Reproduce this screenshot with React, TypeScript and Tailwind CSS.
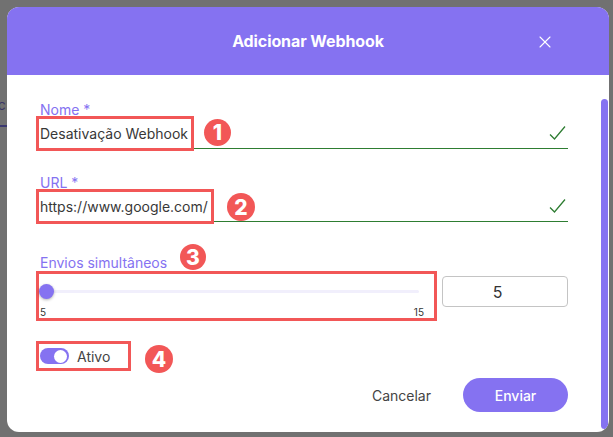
import { X } from 'lucide-react';

const PURPLE = '#8572f1';

function Badge({ n, className }: { n: number; className: string }) {
  return (
    <span
      className={`absolute flex items-center justify-center rounded-full bg-[#f25757] text-white font-extrabold text-[21px] leading-none ${className}`}
    >
      {n}
    </span>
  );
}

function Check() {
  return (
    <svg width="17" height="16" viewBox="0 0 17 16" className="ml-auto mr-[2px]">
      <path d="M1 9.5 L5.5 14 L16 1.5" fill="none" stroke="#2e7d32" strokeWidth="1.3" />
    </svg>
  );
}

function Field({ label, value, boxRight, badge, badgeClass, className }: {
  label: string;
  value: string;
  boxRight: number;
  badge: number;
  badgeClass: string;
  className: string;
}) {
  return (
    <div className={`relative ${className}`}>
      <label className="block text-[14px] leading-[17px] text-[#8572f1]">{label}</label>
      <div className="flex h-[31px] items-center border-b border-[#2e7d32] text-[14px] text-[#383838]">
        <span className="relative">
          {value}
          <span
            className="absolute -left-[4px] -top-[7px] -bottom-[7px] border-[3px] border-[#f25757]"
            style={{ right: -boxRight }}
          />
        </span>
        <Check />
      </div>
      <Badge n={badge} className={badgeClass} />
    </div>
  );
}

export default function App() {
  return (
    <div className="relative w-[613px] h-[437px] overflow-hidden bg-[#717171] pt-[7px] pl-[7px] font-['Inter',sans-serif]">
      {/* page behind the overlay */}
      <div className="absolute left-[-10px] top-[94px] text-[14px] text-[#3b3766]">ac</div>
      <div className="absolute left-0 top-[125px] h-[2px] w-[8px] bg-[#3b3870]" />

      <div className="relative w-[602px] h-[425px] rounded-[12px] overflow-hidden bg-white flex flex-col">
        {/* header */}
        <div className="relative h-[68px] shrink-0 flex items-center justify-center" style={{ backgroundColor: PURPLE }}>
          <h2 className="text-white text-[16px] font-bold tracking-[-0.1px]">Adicionar Webhook</h2>
          <X className="absolute right-[54px] top-[25px] text-white" size={20} strokeWidth={1.3} />
        </div>

        {/* body */}
        <div className="relative flex-1 pl-[33px] pr-[41px] pt-[26px]">
          <div className="absolute right-[1px] top-[24px] bottom-[3px] w-[7px] rounded-full bg-[#8572f1]" />

          <Field
            label="Nome *"
            value="Desativação Webhook"
            boxRight={6}
            badge={1}
            badgeClass="left-[164px] top-[18px] w-[27px] h-[27px]"
            className=""
          />
          <Field
            label="URL *"
            value="https://www.google.com/"
            boxRight={6}
            badge={2}
            badgeClass="left-[187px] top-[19px] w-[28px] h-[28px]"
            className="mt-[25px]"
          />

          {/* envios simultaneos */}
          <div className="relative mt-[32px]">
            <label className="block text-[14px] leading-[17px] text-[#8572f1]">Envios simultâneos</label>
            <Badge n={3} className="left-[140px] -top-[10px] w-[26px] h-[26px] text-[19px]" />
            <div className="flex items-start -ml-[4px]">
              <div className="relative w-[401px] h-[50px] border-[3px] border-[#f25757]">
                <div className="absolute left-[1px] right-[15px] top-[16px] h-[3px] rounded-full bg-[#f1effc]" />
                <div className="absolute left-0 top-[10px] w-[15px] h-[15px] rounded-full bg-[#8572f1] shadow-[0_1px_3px_rgba(0,0,0,0.3)]" />
                <div className="absolute left-[1px] right-[10px] top-[32px] flex justify-between text-[10px] leading-[12px] text-[#333]">
                  <span>5</span>
                  <span>15</span>
                </div>
              </div>
              <div className="ml-[5px] mt-[5px] w-[126px] h-[31px] rounded-[4px] border border-[#c4c4c4] flex items-center justify-center pr-[15px] text-[16px] text-[#333]">
                5
              </div>
            </div>
          </div>

          {/* ativo */}
          <div className="relative mt-[20px] -ml-[4px] w-[95px] h-[30px] border-[3px] border-[#f25757] flex items-center pl-[1px]">
            <div className="w-[29px] h-[16px] rounded-full bg-[#8572f1] flex items-center justify-end pr-[2px]">
              <div className="w-[13px] h-[13px] rounded-full bg-white" />
            </div>
            <span className="ml-[8px] text-[14px] text-[#444]">Ativo</span>
            <Badge n={4} className="left-[106px] top-[1px] w-[28px] h-[28px]" />
          </div>

          {/* actions */}
          <div className="mt-[7px] flex items-center justify-end">
            <button className="mr-[32px] text-[14px] text-[#444]">Cancelar</button>
            <button className="w-[105px] h-[34px] rounded-full bg-[#8572f1] text-white text-[14px] font-medium">Enviar</button>
          </div>
        </div>
      </div>
    </div>
  );
}
